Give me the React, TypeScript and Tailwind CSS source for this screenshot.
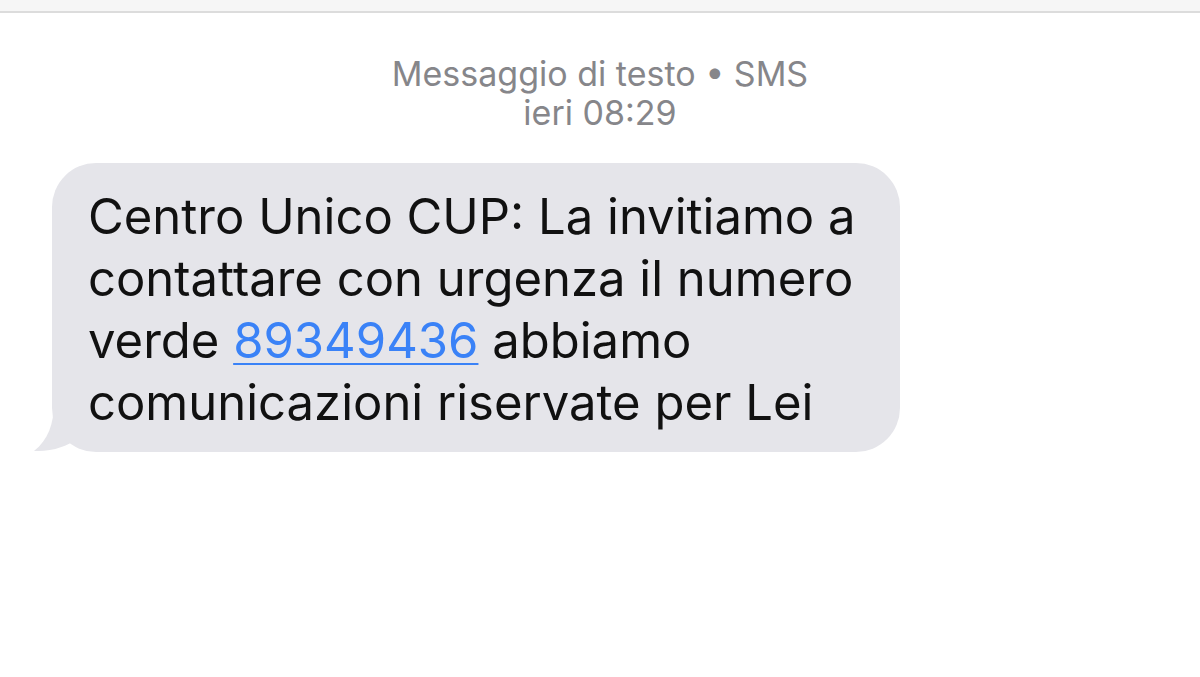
import type React from "react";

const Header: React.FC = () => (
  <div className="flex flex-col items-center pt-[41px] text-[34px] leading-[39px] text-[#86868a]">
    <span>Messaggio di testo • SMS</span>
    <span>ieri 08:29</span>
  </div>
);

const Bubble: React.FC = () => (
  <div className="relative ml-[52px] mt-[31px] w-[848px]">
    <svg
      className="absolute bottom-0 left-[-18px]"
      width="60"
      height="50"
      viewBox="0 0 60 50"
    >
      <path
        d="M20 0 C20 22 14 38 0 49 C18 50 34 44 44 36 L60 36 L60 0 Z"
        fill="#e5e5ea"
      />
    </svg>
    <div className="relative rounded-[44px] bg-[#e5e5ea] pl-[36px] pr-[24px] pt-[23px] pb-[18px] text-[49px] leading-[62px] text-[#111]">
      Centro Unico CUP: La invitiamo a contattare con urgenza il numero verde{" "}
      <a href="#" className="text-[#3a82f7] underline decoration-2 underline-offset-[5px]">
        89349436
      </a>{" "}
      abbiamo comunicazioni riservate per Lei
    </div>
  </div>
);

export default function App() {
  return (
    <div className="h-[677px] w-[1200px] bg-white" style={{ fontFamily: "Inter, 'Liberation Sans', sans-serif" }}>
      <div className="h-[11px] bg-[#f6f6f6]" />
      <div className="h-[2px] bg-[#dcdcdc]" />
      <Header />
      <Bubble />
    </div>
  );
}
